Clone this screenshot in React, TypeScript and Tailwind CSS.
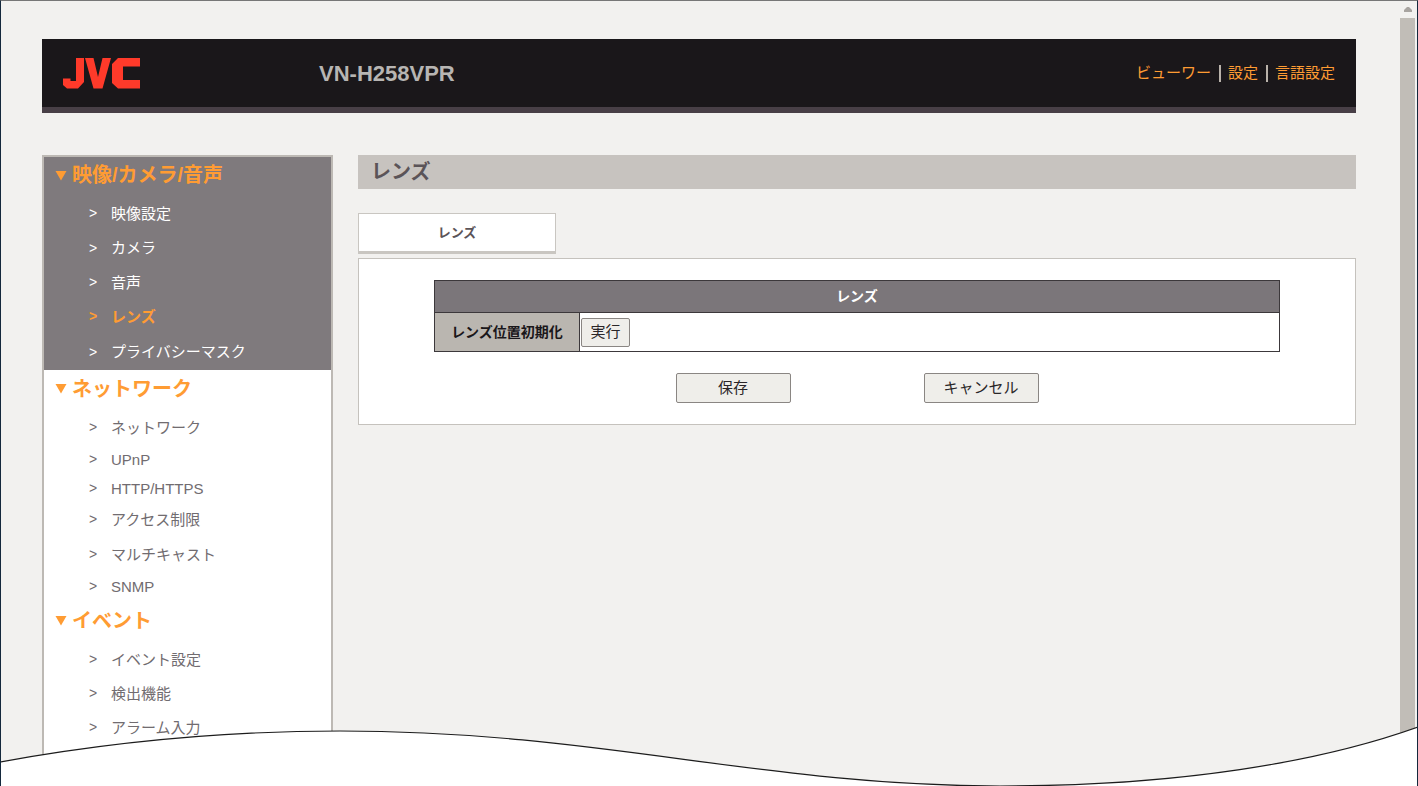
const jp = "font-['Liberation_Sans','Noto_Sans_CJK_JP',sans-serif]";

type Item = { label: string; h: string; active?: boolean };
type Group = { title: string; h: string; dark?: boolean; items: Item[] };

const groups: Group[] = [
  {
    title: "映像/カメラ/音声",
    h: "h-[39px] pb-[3px]",
    dark: true,
    items: [
      { label: "映像設定", h: "h-[34px]" },
      { label: "カメラ", h: "h-[35px]" },
      { label: "音声", h: "h-[34px]" },
      { label: "レンズ", h: "h-[34px]", active: true },
      { label: "プライバシーマスク", h: "h-[37px]" },
    ],
  },
  {
    title: "ネットワーク",
    h: "h-[36px] pt-[1px]",
    items: [
      { label: "ネットワーク", h: "h-[42px]" },
      { label: "UPnP", h: "h-[22px]" },
      { label: "HTTP/HTTPS", h: "h-[36px]" },
      { label: "アクセス制限", h: "h-[26px]" },
      { label: "マルチキャスト", h: "h-[44px]" },
      { label: "SNMP", h: "h-[20px]" },
    ],
  },
  {
    title: "イベント",
    h: "h-[48px] pt-[1px]",
    items: [
      { label: "イベント設定", h: "h-[30px]" },
      { label: "検出機能", h: "h-[38px]" },
      { label: "アラーム入力", h: "h-[30px]" },
    ],
  },
];

function Caret() {
  return (
    <svg width="12" height="11" viewBox="0 0 12 11" className="shrink-0">
      <path d="M0.5 1H11.5L6 10.5Z" fill="#ff9c33" />
    </svg>
  );
}

function NavGroup({ group }: { group: Group }) {
  return (
    <div className={group.dark ? "bg-[#7f7a7d]" : "bg-white"}>
      <div className={`flex items-center gap-[5px] pl-[11px] text-[20px] font-bold leading-none text-[#ff9c33] ${group.h}`}>
        <Caret />
        <span>{group.title}</span>
      </div>
      {group.items.map((it) => (
        <div
          key={it.label}
          className={`flex items-center pl-[45px] text-[15px] leading-none ${it.h} ${
            it.active ? "font-bold text-[#ff9c33]" : group.dark ? "text-white" : "text-[#716c70]"
          }`}
        >
          <span className="w-[22px] text-[14px]">&gt;</span>
          <span>{it.label}</span>
        </div>
      ))}
    </div>
  );
}

function Logo() {
  return (
    <svg width="77" height="31" viewBox="0 0 77 31" className="shrink-0">
      <g fill="#ff3a2a">
        <path d="M13 0H21V24L15 30.5H4L0 27V20.5H7.5V23H13Z" />
        <path d="M22 0H30.5L35 19L39.5 0H48L39.5 30.5H30.5Z" />
        <path d="M55 0H77V8.5H60V22H77V30.5H55L49 25V6Z" />
      </g>
    </svg>
  );
}

export default function App() {
  return (
    <div className={`relative h-[786px] w-[1418px] overflow-hidden border-t border-t-[#777777] border-l border-l-[#14283c] border-r border-r-[#14283c] bg-[#f2f1ef] ${jp}`}>
      <div className="flex">
        <div className="w-[1399px] shrink-0 pl-[41px] pr-[44px] pt-[38px]">
          <header className="flex h-[74px] items-center border-b-[6px] border-b-[#483f46] bg-[#1a171a] pl-[21px] pr-[21px]">
            <Logo />
            <div className="ml-[179px] text-[22px] font-bold text-[#b7b5b3]">VN-H258VPR</div>
            <nav className="ml-auto flex items-center text-[15px] text-[#ff9c33]">
              <span>ビューワー</span>
              <span className="ml-[8px] mr-[7px] h-[17px] w-[2px] bg-[#b9b2aa]" />
              <span>設定</span>
              <span className="ml-[8px] mr-[7px] h-[17px] w-[2px] bg-[#b9b2aa]" />
              <span>言語設定</span>
            </nav>
          </header>
          <div className="mt-[42px] flex">
            <aside className="h-[640px] w-[291px] shrink-0 border-x-2 border-t-2 border-[#bdb9b4] bg-white">
              {groups.map((g) => (
                <NavGroup key={g.title} group={g} />
              ))}
            </aside>
            <main className="ml-[25px] min-w-0 flex-1">
              <div className="flex h-[34px] items-center bg-[#c7c3bf] pl-[13px] text-[20px] font-bold text-[#5b5458]">レンズ</div>
              <div className="mt-[24px] flex h-[41px] w-[198px] items-center justify-center border border-b-[3px] border-[#c9c6c1] bg-white text-[13px] font-bold text-[#5b5458]">
                レンズ
              </div>
              <div className="mt-[4px] h-[167px] border border-[#c5c2bd] bg-white pt-[21px]">
                <div className="mx-auto w-[846px] border border-[#3c383b] text-[14px]">
                  <div className="flex h-[32px] items-center justify-center border-b border-[#3c383b] bg-[#7b767a] font-bold text-white">レンズ</div>
                  <div className="flex h-[38px]">
                    <div className="flex w-[145px] items-center justify-center border-r border-[#3c383b] bg-[#bab6b0] font-bold text-[#1a171a]">レンズ位置初期化</div>
                    <div className="flex items-center pl-[1px]">
                      <button className="h-[29px] w-[49px] rounded-[2px] border border-[#8a8683] bg-[#efeeea] text-[15px] text-[#2a2628]">実行</button>
                    </div>
                  </div>
                </div>
                <div className="mt-[21px] flex justify-center gap-[133px]">
                  <button className="h-[30px] w-[115px] rounded-[2px] border border-[#8a8683] bg-[#efeeea] text-[15px] text-[#2a2628]">保存</button>
                  <button className="h-[30px] w-[115px] rounded-[2px] border border-[#8a8683] bg-[#efeeea] text-[15px] text-[#2a2628]">キャンセル</button>
                </div>
              </div>
            </main>
          </div>
        </div>
        <div className="flex w-[15px] shrink-0 flex-col items-center">
          <svg width="8" height="6" viewBox="0 0 8 6" className="mt-[5px] mb-[6px]">
            <path d="M0 6V4L3 1H5L8 4V6Z" fill="#a8a4a0" />
          </svg>
          <div className="h-[760px] w-[15px] bg-[#c1bdb7]" />
        </div>
      </div>
      <svg
        className="absolute bottom-0 -left-px"
        width="1418"
        height="70"
        viewBox="0 716 1418 70"
      >
        <path
          d="M0 762C110 742 220 731 340 731C600 731 760 786 1000 786C1180 786 1320 762 1418 727V786H0Z"
          fill="#ffffff"
        />
        <path
          d="M0 762C110 742 220 731 340 731C600 731 760 786 1000 786C1180 786 1320 762 1418 727"
          fill="none"
          stroke="#1c1c1c"
          strokeWidth="1.2"
        />
      </svg>
    </div>
  );
}
